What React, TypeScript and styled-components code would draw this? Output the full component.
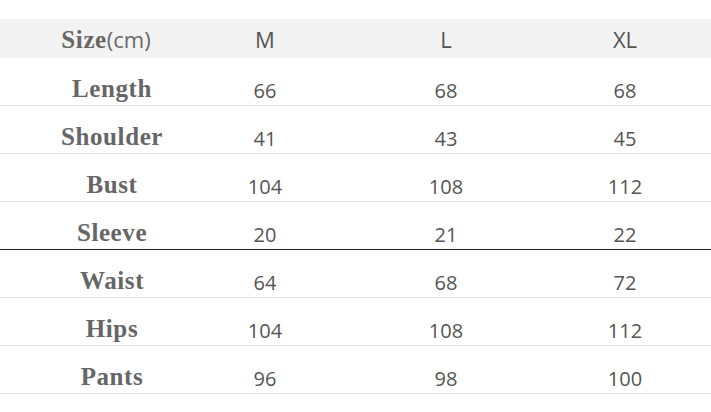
import React from "react";
import styled, { createGlobalStyle } from "styled-components";

const Global = createGlobalStyle`
  html, body { margin: 0; padding: 0; background: #ffffff; }
  body { width: 711px; height: 412px; overflow: hidden; }
`;

const Page = styled.div`
  padding-top: 19px;
  width: 711px;
`;

const COLS = "224px 82px 280px 78px 1fr";

const HeaderRow = styled.div`
  display: grid;
  grid-template-columns: ${COLS};
  height: 39px;
  align-items: center;
  background: #f3f3f3;
`;

const Row = styled.div<{ $strong?: boolean }>`
  display: grid;
  grid-template-columns: ${COLS};
  height: 47px;
  border-bottom: 1px solid ${(p) => (p.$strong ? "#1c1c1c" : "#e3e3e3")};
  align-items: start;
`;

const Label = styled.div`
  text-align: center;
  font-family: "Liberation Serif", "Times New Roman", serif;
  font-weight: 700;
  font-size: 25px;
  letter-spacing: 0.6px;
  line-height: 24px;
  color: #666666;
  padding-top: 19px;
`;

const HeadLabel = styled.div`
  text-align: center;
  padding-right: 12px;
  color: #666666;
  white-space: nowrap;
`;

const HeadSerif = styled.span`
  font-family: "Liberation Serif", "Times New Roman", serif;
  font-weight: 700;
  font-size: 25px;
  letter-spacing: 0.6px;
`;

const HeadSans = styled.span`
  font-family: "Open Sans", "Liberation Sans", sans-serif;
  font-size: 22px;
  color: #6a6a6a;
`;

const Value = styled.div<{ $head?: boolean }>`
  text-align: center;
  font-family: "Open Sans", "Liberation Sans", sans-serif;
  font-size: ${(p) => (p.$head ? "22px" : "20px")};
  line-height: ${(p) => (p.$head ? "22px" : "20px")};
  color: #555555;
  padding-top: ${(p) => (p.$head ? "0" : "23px")};
`;

const rows: { label: string; values: string[]; strong?: boolean }[] = [
  { label: "Length", values: ["66", "68", "68"] },
  { label: "Shoulder", values: ["41", "43", "45"] },
  { label: "Bust", values: ["104", "108", "112"] },
  { label: "Sleeve", values: ["20", "21", "22"], strong: true },
  { label: "Waist", values: ["64", "68", "72"] },
  { label: "Hips", values: ["104", "108", "112"] },
  { label: "Pants", values: ["96", "98", "100"] },
];

export default function App() {
  return (
    <Page>
      <Global />
      <HeaderRow>
        <HeadLabel>
          <HeadSerif>Size</HeadSerif>
          <HeadSans>(cm)</HeadSans>
        </HeadLabel>
        <Value $head>M</Value>
        <Value $head>L</Value>
        <Value $head>XL</Value>
        <div />
      </HeaderRow>
      {rows.map((r) => (
        <Row key={r.label} $strong={r.strong}>
          <Label>{r.label}</Label>
          {r.values.map((v, i) => (
            <Value key={i}>{v}</Value>
          ))}
          <div />
        </Row>
      ))}
    </Page>
  );
}
